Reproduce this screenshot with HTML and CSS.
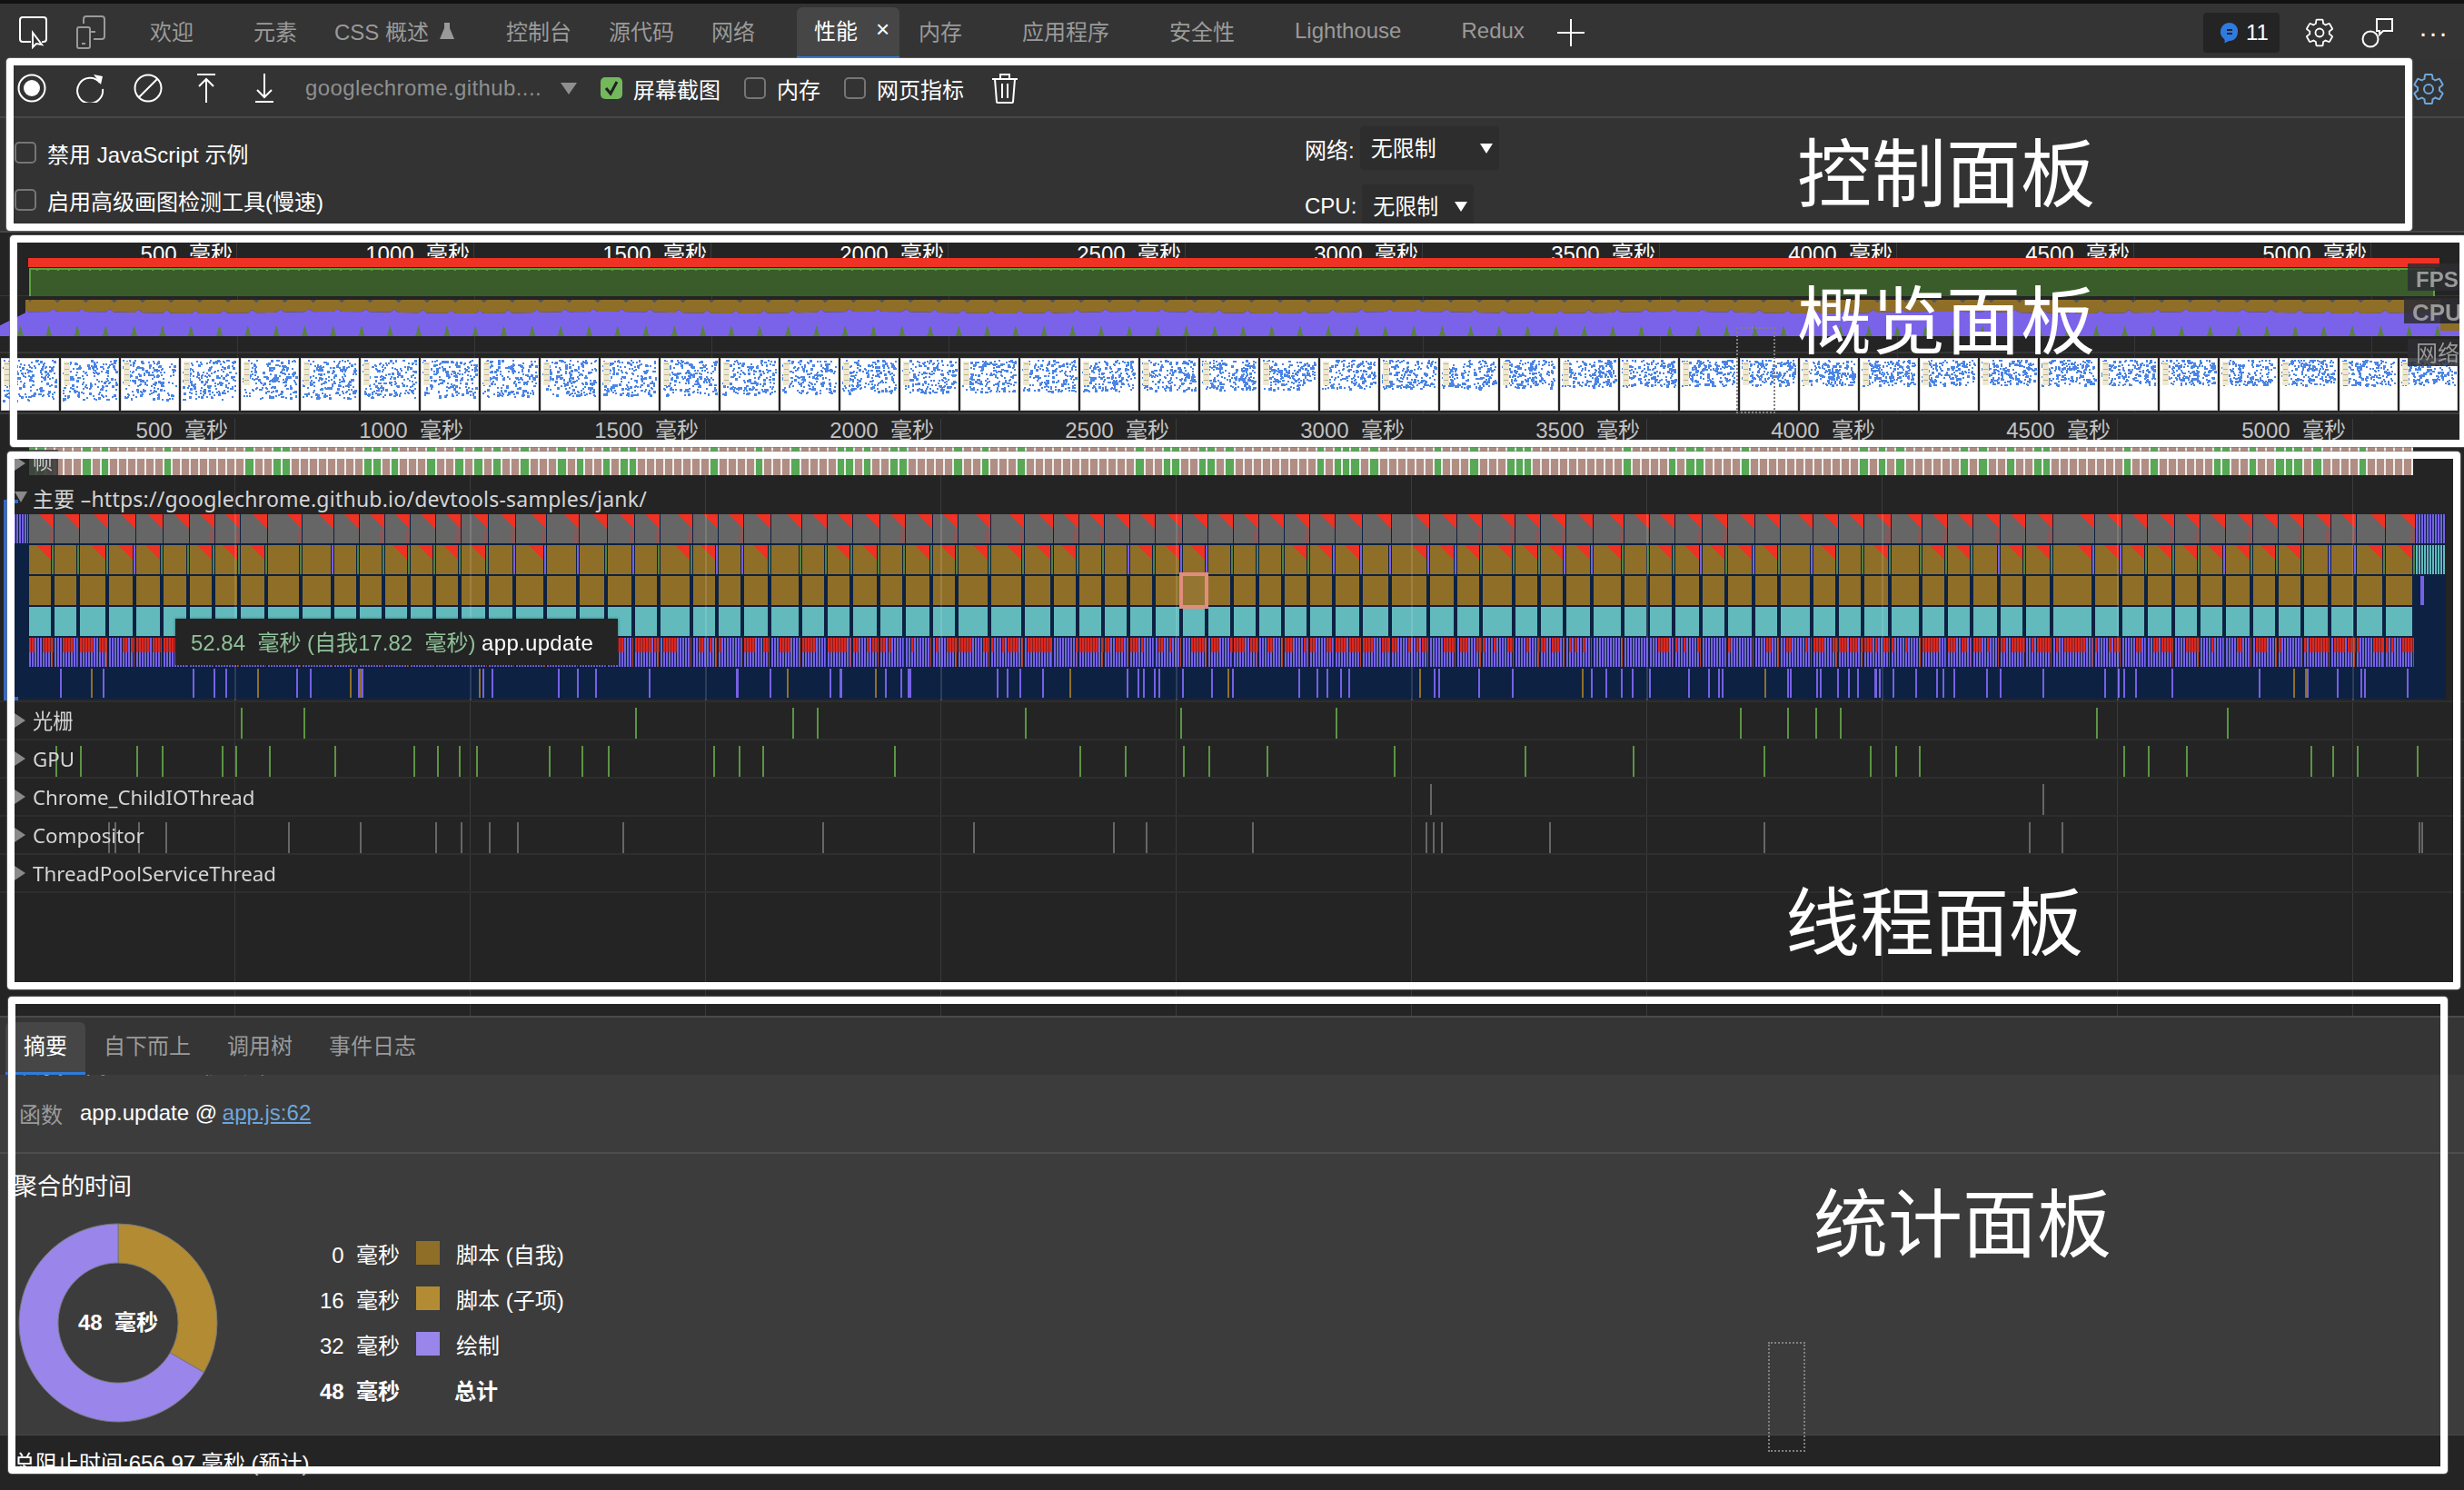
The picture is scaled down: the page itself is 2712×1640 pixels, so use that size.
FILE: index.html
```html
<!DOCTYPE html>
<html lang="zh">
<head>
  <meta charset="UTF-8">
  <title>性能</title>
  <link rel="stylesheet" href="styles.css">
</head>
<body>
  <svg class="defs">
    <symbol id="gear" viewBox="0 0 24 24">
      <path fill="none" stroke="currentColor" stroke-width="1.2" d="M19.14 12.94c.04-.3.06-.61.06-.94 0-.32-.02-.64-.07-.94l2.03-1.58c.18-.14.23-.41.12-.61l-1.92-3.32c-.12-.22-.37-.29-.59-.22l-2.39.96c-.5-.38-1.03-.7-1.62-.94l-.36-2.54c-.04-.24-.24-.41-.48-.41h-3.84c-.24 0-.43.17-.47.41l-.36 2.54c-.59.24-1.13.57-1.62.94l-2.39-.96c-.22-.08-.47 0-.59.22L2.74 8.87c-.12.21-.08.47.12.61l2.03 1.58c-.05.3-.09.63-.09.94s.02.64.07.94l-2.03 1.58c-.18.14-.23.41-.12.61l1.92 3.32c.12.22.37.29.59.22l2.39-.96c.5.38 1.03.7 1.62.94l.36 2.54c.05.24.24.41.48.41h3.84c.24 0 .44-.17.47-.41l.36-2.54c.59-.24 1.13-.56 1.62-.94l2.39.96c.22.08.47 0 .59-.22l1.92-3.32c.12-.22.07-.47-.12-.61l-2.01-1.58z"/>
      <circle cx="12" cy="12" r="3" fill="none" stroke="currentColor" stroke-width="1.2"/>
    </symbol>
  </svg>

  <!-- 顶部标签栏 -->
  <header class="tabbar">
    <svg class="icon-btn first" viewBox="0 0 32 38" width="32" height="38"><path fill="none" stroke="#fff" stroke-width="2" d="M14 30H5a3 3 0 0 1-3-3V6a3 3 0 0 1 3-3h23a3 3 0 0 1 3 3v21a3 3 0 0 1-3 3h-2"/><path fill="#333" stroke="#fff" stroke-width="2" d="M16 20l0 16 4-4 6 1z"/></svg>
    <svg class="icon-btn" viewBox="0 0 32 38" width="32" height="38"><path fill="none" stroke="#9a9a9a" stroke-width="2" d="M8 10V5a3 3 0 0 1 3-3h17a3 3 0 0 1 3 3v19a3 3 0 0 1-3 3h-9"/><rect x="1" y="14" width="14" height="23" rx="2" fill="none" stroke="#9a9a9a" stroke-width="2"/><path stroke="#9a9a9a" stroke-width="2" d="M16 19h5M6 32h4"/></svg>
    <div class="tab tab-gap">欢迎</div>
    <div class="tab">元素</div>
    <div class="tab tab-gap-sm">CSS 概述
      <svg class="flask" viewBox="0 0 16 20" width="16" height="20"><path fill="#9a9a9a" d="M5 1h6v6l5 12H0L5 7z"/></svg>
    </div>
    <div class="tab">控制台</div>
    <div class="tab">源代码</div>
    <div class="tab tab-gap">网络</div>
    <div class="tab tab-active">性能<span class="tab-close">×</span></div>
    <div class="tab tab-gap">内存</div>
    <div class="tab tab-gap">应用程序</div>
    <div class="tab tab-gap">安全性</div>
    <div class="tab tab-gap">Lighthouse</div>
    <div class="tab">Redux</div>
    <svg class="plus" viewBox="0 0 30 30" width="30" height="30"><path stroke="#fff" stroke-width="2" d="M0 15h30M15 0v30"/></svg>
    <div class="tabbar-right">
      <div class="issues">
        <svg viewBox="0 0 20 24" width="20" height="24"><path fill="#2f7be0" d="M10 1a9 9 0 0 1 9 10c0 6-4 10-9 10-2 0-3 2-6 2 1-1 1-3 0-4A10 10 0 0 1 10 1z"/><path stroke="#242424" stroke-width="2" d="M7 9h6M7 13h6"/></svg>
        <span>11</span>
      </div>
      <svg class="gear" width="36" height="36"><use href="#gear"/></svg>
      <svg class="feedback" viewBox="0 0 36 36" width="36" height="36"><circle cx="10" cy="25" r="8.5" fill="none" stroke="#fff" stroke-width="2"/><path fill="none" stroke="#fff" stroke-width="2" d="M17 3h17v13H24l-4 4v-4h-3z"/></svg>
      <div class="more">···</div>
    </div>
  </header>

  <!-- 控制面板 -->
  <section class="toolbar">
    <svg class="tool record" viewBox="0 0 32 32" width="32" height="32"><circle cx="16" cy="16" r="14.5" fill="none" stroke="#fff" stroke-width="2"/><circle cx="16" cy="16" r="9" fill="#fff"/></svg>
    <svg class="tool" viewBox="0 0 32 32" width="32" height="32"><path fill="none" stroke="#fff" stroke-width="2" d="M27 10a14 14 0 1 0 3 7"/><path fill="#fff" d="M20 1l10 2-2 9z"/></svg>
    <svg class="tool" viewBox="0 0 32 32" width="32" height="32"><circle cx="16" cy="16" r="14.5" fill="none" stroke="#fff" stroke-width="2"/><path stroke="#fff" stroke-width="2" d="M26 6L6 26"/></svg>
    <svg class="tool" viewBox="0 0 32 32" width="32" height="32"><path fill="none" stroke="#fff" stroke-width="2" d="M6 1h20M16 32V6M8 14l8-8 8 8"/></svg>
    <svg class="tool" viewBox="0 0 32 32" width="32" height="32"><path fill="none" stroke="#fff" stroke-width="2" d="M6 31h20M16 0v26M8 18l8 8 8-8"/></svg>
    <span class="origin">googlechrome.github....</span>
    <span class="origin-arrow"></span>
    <label class="check check-first"><span class="box box-on"><svg viewBox="0 0 24 24" width="24" height="24"><path fill="none" stroke="#222" stroke-width="3" d="M6 12l5 6 7-13"/></svg></span>屏幕截图</label>
    <label class="check"><span class="box"></span>内存</label>
    <label class="check"><span class="box"></span>网页指标</label>
    <svg class="trash" viewBox="0 0 30 34" width="30" height="34"><path fill="none" stroke="#fff" stroke-width="2" d="M1 7h28M10 7V2h10v5M4 7l2 25a1 1 0 0 0 1 1h16a1 1 0 0 0 1-1l2-25M12 12v16M18 12v16"/></svg>
    <svg class="gear-blue" width="40" height="40"><use href="#gear"/></svg>
  </section>

  <section class="settings">
    <div class="settings-col">
      <label class="check"><span class="box"></span>禁用 JavaScript 示例</label>
      <label class="check"><span class="box"></span>启用高级画图检测工具(慢速)</label>
    </div>
    <div class="throttle-col">
      <div class="throttle">网络:<span class="select select-wide">无限制<i class="select-arrow"></i></span></div>
      <div class="throttle">CPU:<span class="select">无限制<i class="select-arrow"></i></span></div>
    </div>
  </section>

  <!-- 概览面板 -->
  <section class="overview">
    <div class="ruler ruler-top">
      <span>500&nbsp; 毫秒</span><span>1000&nbsp; 毫秒</span><span>1500&nbsp; 毫秒</span><span>2000&nbsp; 毫秒</span><span>2500&nbsp; 毫秒</span>
      <span>3000&nbsp; 毫秒</span><span>3500&nbsp; 毫秒</span><span>4000&nbsp; 毫秒</span><span>4500&nbsp; 毫秒</span><span>5000&nbsp; 毫秒</span>
    </div>
    <canvas id="overview-canvas" width="2712" height="170"></canvas>
    <div class="ruler ruler-bottom">
      <span>500&nbsp; 毫秒</span><span>1000&nbsp; 毫秒</span><span>1500&nbsp; 毫秒</span><span>2000&nbsp; 毫秒</span><span>2500&nbsp; 毫秒</span>
      <span>3000&nbsp; 毫秒</span><span>3500&nbsp; 毫秒</span><span>4000&nbsp; 毫秒</span><span>4500&nbsp; 毫秒</span><span>5000&nbsp; 毫秒</span>
    </div>
    <div class="ov-tag ov-fps">FPS</div>
    <div class="ov-tag ov-cpu">CPU</div>
    <div class="ov-tag ov-net">网络</div>
    <div class="ov-dashed"></div>
  </section>

  <!-- 线程面板 -->
  <section class="threads">
    <div class="frames">
      <canvas id="frames-canvas" width="2712" height="42"></canvas>
      <i class="arrow arrow-right frames-arrow"></i>
      <span class="frames-label">帧</span>
    </div>
    <div class="main-head"><i class="arrow arrow-down"></i>主要 –https://googlechrome.github.io/devtools-samples/jank/</div>
    <div class="flame">
      <canvas id="flame-canvas" width="2712" height="207"></canvas>
      <div class="flame-mark"></div>
      <div class="flame-pick"></div>
      <div class="flame-tip">52.84&nbsp; 毫秒 (自我17.82&nbsp; 毫秒) <b>app.update</b></div>
    </div>
    <div class="track"><canvas class="ticks" width="2712" height="42" data-track="raster"></canvas><i class="arrow arrow-right"></i><span class="track-name">光栅</span></div>
    <div class="track"><canvas class="ticks" width="2712" height="42" data-track="gpu"></canvas><i class="arrow arrow-right"></i><span class="track-name">GPU</span></div>
    <div class="track"><canvas class="ticks" width="2712" height="42" data-track="io"></canvas><i class="arrow arrow-right"></i><span class="track-name">Chrome_ChildIOThread</span></div>
    <div class="track"><canvas class="ticks" width="2712" height="42" data-track="compositor"></canvas><i class="arrow arrow-right"></i><span class="track-name">Compositor</span></div>
    <div class="track"><canvas class="ticks" width="2712" height="42" data-track="pool"></canvas><i class="arrow arrow-right"></i><span class="track-name">ThreadPoolServiceThread</span></div>
  </section>

  <!-- 统计面板 -->
  <section class="details">
    <nav class="detail-tabs">
      <div class="detail-tab detail-tab-active">摘要</div>
      <div class="detail-tab">自下而上</div>
      <div class="detail-tab">调用树</div>
      <div class="detail-tab">事件日志</div>
    </nav>
    <div class="detail-clip"><span>自我时间: 17.82 毫秒 脚本</span></div>
    <div class="detail-func"><span class="detail-key">函数</span>app.update @ <a href="#">app.js:62</a></div>
    <h3 class="detail-title">聚合的时间</h3>
    <div class="detail-chart">
      <div class="pie">
        <svg viewBox="0 0 220 220" width="220" height="220">
          <path fill="#b38b32" stroke="#777" stroke-width="1" d="M110 1A109 109 0 0 1 204.4 164.5L167.2 143A66 66 0 0 0 110 44Z"/>
          <path fill="#9a85ea" stroke="#777" stroke-width="1" d="M204.4 164.5A109 109 0 1 1 110 1L110 44A66 66 0 1 0 167.2 143Z"/>
        </svg>
        <b class="pie-total">48&nbsp; 毫秒</b>
      </div>
      <div class="legend">
        <span class="legend-val">0&nbsp; 毫秒</span><i class="swatch swatch-self"></i><span>脚本 (自我)</span>
        <span class="legend-val">16&nbsp; 毫秒</span><i class="swatch swatch-child"></i><span>脚本 (子项)</span>
        <span class="legend-val">32&nbsp; 毫秒</span><i class="swatch swatch-paint"></i><span>绘制</span>
        <b class="legend-val">48&nbsp; 毫秒</b><i></i><b class="legend-total">总计</b>
      </div>
    </div>
    <div class="detail-foot">总阻止时间:656.97 毫秒 (预计)</div>
    <div class="detail-dots"></div>
  </section>

  <!-- 白色标注框 -->
  <div class="note note-control"><span>控制面板</span></div>
  <div class="note note-overview"><span>概览面板</span></div>
  <div class="note note-thread"><span>线程面板</span></div>
  <div class="note note-stats"><span>统计面板</span></div>

  <script src="script.js"></script>
</body>
</html>
```

FILE: styles.css
```css
* {
  box-sizing: border-box;
}
html, body {
  margin: 0;
  padding: 0;
}
body {
  position: relative;
  width: 2712px;
  height: 1640px;
  overflow: hidden;
  display: flex;
  flex-direction: column;
  background-color: #242424;
  color: #fff;
  font-family: "Liberation Sans", "Noto Sans CJK SC", sans-serif;
  font-size: 24px;
}
canvas {
  display: block;
}
.defs {
  position: absolute;
  width: 0;
  height: 0;
}

/* 标签栏 */
.tabbar {
  height: 64px;
  flex: none;
  display: flex;
  align-items: flex-end;
  background-color: #343434;
  border-top: 4px solid #111;
  color: #9a9a9a;
  white-space: nowrap;
}
.icon-btn {
  margin: 0 0 10px 32px;
  flex: none;
}
.icon-btn.first {
  margin-left: 20px;
}
.icon-btn + .tab {
  margin-left: 29px;
}
.tab {
  height: 56px;
  display: flex;
  align-items: center;
  padding: 0 20px 5px;
  margin-right: 1px;
}
.tab-gap {
  margin-right: 26px;
}
.tab-gap-sm {
  margin-right: 17px;
}
.flask {
  margin-left: 12px;
}
.tab-active {
  width: 113px;
  margin-right: 1px;
  padding-left: 19px;
  color: #fff;
  background-color: #464646;
  border-bottom: 2px solid #2f7bd8;
  border-radius: 6px 6px 0 0;
}
.tab-close {
  margin-left: 20px;
  font-size: 26px;
}
.plus {
  margin: 0 0 13px 15px;
}
.tabbar-right {
  margin: 3px 0 0 auto;
  display: flex;
  align-items: center;
  align-self: center;
  padding-right: 17px;
}
.issues {
  width: 84px;
  height: 44px;
  display: flex;
  align-items: center;
  gap: 8px;
  padding-left: 19px;
  border-radius: 4px;
  background-color: #242424;
  color: #fff;
}
.gear {
  color: #fff;
  margin-left: 26px;
}
.feedback {
  margin-left: 28px;
}
.more {
  margin-left: 27px;
  color: #fff;
  font-size: 30px;
  letter-spacing: 1px;
}

/* 工具栏 */
.toolbar {
  height: 66px;
  flex: none;
  position: relative;
  display: flex;
  align-items: center;
  padding: 2px 0 0 19px;
  background-color: #333;
  border-bottom: 2px solid #474747;
}
.tool {
  flex: none;
  margin-right: 32px;
}
.origin {
  margin-left: -3px;
  color: #8f8f8f;
  white-space: nowrap;
  width: 281px;
  letter-spacing: 0.4px;
}
.origin-arrow {
  width: 0;
  height: 0;
  margin-right: 26px;
  border-left: 9px solid transparent;
  border-right: 9px solid transparent;
  border-top: 13px solid #8f8f8f;
}
.check {
  display: flex;
  align-items: center;
  gap: 12px;
  color: #fff;
  white-space: nowrap;
}
.toolbar .check {
  margin-right: 26px;
}
.check-first {
  margin-right: 26px;
}
.box {
  width: 24px;
  height: 24px;
  flex: none;
  border: 2px solid #757575;
  border-radius: 5px;
}
.box-on {
  border: 0;
  background-color: #73b85c;
}
.trash {
  margin-left: 4px;
  flex: none;
}
.gear-blue {
  position: absolute;
  left: 2653px;
  top: 14px;
  color: #6ea6dc;
}

/* 设置 */
.settings {
  height: 126px;
  flex: none;
  display: flex;
  background-color: #333;
  border-bottom: 2px solid #474747;
}
.settings-col {
  width: 1436px;
  padding: 24px 0 0 16px;
  display: flex;
  flex-direction: column;
  gap: 24px;
}
.settings-col .check {
  height: 28px;
}
.throttle-col {
  display: flex;
  flex-direction: column;
  gap: 16px;
  padding-top: 9px;
}
.throttle {
  display: flex;
  align-items: center;
  gap: 6px;
  height: 48px;
}
.select {
  position: relative;
  width: 123px;
  height: 48px;
  display: flex;
  align-items: center;
  padding: 0 0 3px 12px;
  border-radius: 4px;
  background-color: #2d2d2d;
}
.select-wide {
  width: 153px;
}
.select-arrow {
  position: absolute;
  right: 7px;
  top: 19px;
  width: 0;
  height: 0;
  border-left: 7px solid transparent;
  border-right: 7px solid transparent;
  border-top: 11px solid #fff;
}

/* 概览 */
.overview {
  position: relative;
  flex: none;
  background-color: #242424;
}
.ruler {
  display: flex;
  overflow: hidden;
  font-size: 24px;
  line-height: 26px;
  white-space: nowrap;
}
.ruler span {
  flex: none;
  text-align: right;
}
.ruler-top {
  height: 28px;
  color: #fff;
  padding-top: 11px;
}
.ruler-top span {
  width: 261px;
  height: 28px;
  padding-right: 4px;
  border-right: 1px solid #3c3c3c;
}
.ruler-bottom {
  height: 30px;
  padding-top: 5px;
  color: #c2c2c2;
  border-top: 2px solid #3c3c3c;
}
.ruler-bottom span {
  width: 259px;
  height: 30px;
  padding-right: 7px;
  border-right: 1px solid #3c3c3c;
}
.ov-tag {
  position: absolute;
  left: 2650px;
  width: 62px;
  padding-left: 9px;
  color: #9a9a9a;
  font-weight: bold;
  background-color: rgba(45, 45, 50, 0.85);
}
.ov-fps {
  top: 34px;
  height: 30px;
  line-height: 36px;
}
.ov-cpu {
  top: 72px;
  left: 2646px;
  height: 28px;
  line-height: 32px;
  font-size: 26px;
  width: 66px;
}
.ov-net {
  top: 117px;
  height: 30px;
  line-height: 32px;
  font-weight: normal;
}
.ov-dashed {
  position: absolute;
  left: 1911px;
  top: 104px;
  width: 43px;
  height: 95px;
  border: 2px dotted #808080;
}

/* 线程 */
.threads {
  flex: 1;
  min-height: 0;
  background-color: #242424;
  background-image: repeating-linear-gradient(to right, transparent 0, transparent 258px, rgba(255, 255, 255, 0.1) 258px, rgba(255, 255, 255, 0.1) 259px);
}
.frames {
  position: relative;
  height: 42px;
}
.arrow {
  position: absolute;
  left: 16px;
  width: 0;
  height: 0;
}
.arrow-right {
  top: 50%;
  margin-top: -8px;
  border-top: 8px solid transparent;
  border-bottom: 8px solid transparent;
  border-left: 12px solid #8a8a8a;
}
.arrow-down {
  top: 15px;
  border-left: 7px solid transparent;
  border-right: 7px solid transparent;
  border-top: 12px solid #8a8a8a;
}
.frames-arrow {
  top: 26px;
}
.frames-label {
  position: absolute;
  left: 32px;
  top: 11px;
  width: 32px;
  height: 28px;
  line-height: 28px;
  padding-left: 4px;
  color: #c8c8c8;
  font-size: 22px;
  background-color: rgba(60, 60, 60, 0.9);
}
.main-head, .track-name {
  font-family: "Noto Sans", "Noto Sans CJK SC", sans-serif;
  color: #d4d4d4;
}
.main-head {
  position: relative;
  height: 40px;
  font-size: 23px;
  line-height: 46px;
  padding-left: 36px;
  white-space: nowrap;
  letter-spacing: 0.23px;
}
.flame {
  position: relative;
  height: 207px;
}
.flame-mark {
  position: absolute;
  left: 4px;
  top: -16px;
  width: 16px;
  height: 221px;
  border: 4px solid #3269c8;
  border-right: 0;
}
.flame-pick {
  position: absolute;
  left: 1298px;
  top: 64px;
  width: 32px;
  height: 40px;
  border: 4px solid #e08d7d;
  background-color: rgba(255, 255, 255, 0.05);
}
.flame-tip {
  position: absolute;
  left: 193px;
  top: 115px;
  width: 487px;
  height: 51px;
  line-height: 54px;
  padding-left: 17px;
  color: #8fc198;
  background-color: #242424;
  white-space: nowrap;
  box-shadow: 0 0 3px rgba(0, 0, 0, 0.4);
}
.flame-tip b {
  color: #fff;
  font-weight: normal;
  letter-spacing: 0.3px;
}
.track {
  position: relative;
  height: 42px;
  border-bottom: 2px solid #2e2e2e;
}
.track-name {
  position: absolute;
  left: 36px;
  top: 6px;
  font-size: 22.3px;
  line-height: 30px;
  white-space: nowrap;
}
.ticks {
  position: absolute;
  left: 0;
  top: 0;
}

/* 统计 */
.details {
  position: relative;
  height: 522px;
  flex: none;
  display: flex;
  flex-direction: column;
  background-color: #3c3c3c;
  border-top: 2px solid #4a4a4a;
}
.detail-tabs {
  height: 63px;
  flex: none;
  display: flex;
  align-items: flex-end;
  padding-left: 6px;
  background-color: #353535;
  color: #9a9a9a;
}
.detail-tab {
  height: 58px;
  padding: 0 20px;
  line-height: 54px;
}
.detail-tab-active {
  width: 88px;
  color: #fff;
  background-color: #464646;
  border-bottom: 3px solid #2f7bd8;
  border-radius: 6px 6px 0 0;
}
.detail-clip {
  height: 5px;
  overflow: hidden;
  padding-left: 22px;
  flex: none;
}
.detail-clip span {
  display: block;
  margin-top: -24px;
  color: #bbb;
  line-height: 28px;
}
.detail-func {
  height: 82px;
  flex: none;
  display: flex;
  align-items: center;
  padding: 0 0 6px 21px;
  white-space: pre;
  border-bottom: 2px solid #4d4d4d;
}
.detail-key {
  width: 67px;
  color: #9a9a9a;
}
.detail-func a {
  color: #6da6dc;
  margin-left: -1px;
}
.detail-title {
  margin: 0;
  height: 76px;
  flex: none;
  padding-left: 15px;
  line-height: 72px;
  font-size: 26px;
  font-weight: normal;
}
.detail-chart {
  flex: none;
  height: 233px;
  display: flex;
  padding-left: 20px;
}
.pie {
  position: relative;
  width: 220px;
  height: 220px;
}
.pie svg {
  display: block;
}
.pie-total {
  position: absolute;
  left: 0;
  top: 96px;
  width: 220px;
  text-align: center;
  white-space: nowrap;
  line-height: 28px;
}
.legend {
  margin-left: 45px;
  padding-top: 8px;
  display: grid;
  grid-template-columns: 155px 26px auto;
  grid-auto-rows: 50px;
  column-gap: 18px;
  align-items: center;
  justify-content: start;
  align-content: start;
}
.legend-val {
  text-align: right;
  white-space: nowrap;
}
.legend-total {
  margin-left: -2px;
}
.swatch {
  width: 26px;
  height: 26px;
}
.swatch-self {
  background-color: #8f6f28;
}
.swatch-child {
  background-color: #b38b32;
}
.swatch-paint {
  background-color: #9a85ea;
}
.detail-foot {
  flex: 1;
  padding: 15px 0 0 15px;
  line-height: 32px;
  background-color: #242424;
  border-top: 1px solid #474747;
  white-space: nowrap;
}
.detail-dots {
  position: absolute;
  left: 1946px;
  top: 357px;
  width: 41px;
  height: 121px;
  border: 2px dotted #808080;
}

/* 标注框 */
.note {
  position: absolute;
  z-index: 10;
  border: 8px solid #fff;
  border-radius: 4px;
  box-shadow: 0 0 1px 1px rgba(120, 120, 120, 0.6);
  pointer-events: none;
  font-size: 82px;
  line-height: 82px;
  white-space: nowrap;
  font-family: "Noto Sans CJK SC", sans-serif;
}
.note-control {
  left: 7px;
  top: 64px;
  width: 2648px;
  height: 190px;
  padding: 73px 0 0 1963px;
}
.note-overview {
  left: 11px;
  top: 259px;
  width: 2704px;
  height: 233px;
  padding: 40px 0 0 1959px;
}
.note-thread {
  left: 8px;
  top: 497px;
  width: 2700px;
  height: 592px;
  padding: 464px 0 0 1949px;
}
.note-stats {
  left: 9px;
  top: 1097px;
  width: 2685px;
  height: 525px;
  padding: 196px 0 0 1979px;
}
```

FILE: script.js
```js
// 简单的伪随机数，保证每次画出来都一样
function makeRandom(seed) {
  return function () {
    seed = (seed * 1664525 + 1013904223) % 4294967296;
    return seed / 4294967296;
  };
}

const RED = '#ee3224';
const BROWN = '#8f6f28';
const TEAL = '#62babc';
const PURPLE = '#7561e4';
const NAVY = '#0d2142';

function drawOverview() {
  const ctx = document.getElementById('overview-canvas').getContext('2d');
  const rand = makeRandom(7);

  // 网格线
  ctx.fillStyle = '#363636';
  ctx.fillRect(0, 41, 2712, 1);
  ctx.fillRect(0, 103, 2712, 2);
  for (let i = 1; i <= 10; i++) ctx.fillRect(261 * i, 0, 1, 170);

  // FPS
  ctx.fillStyle = RED;
  ctx.fillRect(31, 0, 2654, 10);
  ctx.fillStyle = '#3a5c2a';
  ctx.fillRect(32, 11, 2648, 31);
  ctx.fillStyle = '#5ba03e';
  ctx.fillRect(32, 11, 2648, 2);
  ctx.fillRect(32, 11, 2, 31);
  ctx.fillRect(2678, 11, 2, 31);
  for (let x = 40; x < 2680; x += 11.5) ctx.fillRect(Math.round(x), 13, 2, 1);

  // CPU
  for (let x = 0; x < 2707; x++) {
    const p = x / 31.3;
    const dip = Math.pow(Math.max(0, Math.cos(p * Math.PI * 2)), 10);
    const wave = Math.pow(Math.max(0, Math.cos((p + 0.15) * Math.PI * 2)), 6) * 3 + Math.sin(x / 47) * 1;
    let top = 46;
    let mid = 60 - wave;
    const bottom = 86;
    if (x < 28) {
      top = 60;
      mid = 74 - x / 2;
    }
    if (x > 2685) {
      top = 72;
      mid = 80;
    }
    const grey = x >= 32 && x < 2685;
    if (grey) {
      ctx.fillStyle = '#555';
      ctx.fillRect(x, 46, 1, 5);
    }
    const offset = grey ? dip * 3 : 0;
    if (x >= 28) {
      ctx.fillStyle = BROWN;
      ctx.fillRect(x, top + offset, 1, mid - top - offset);
    }
    ctx.fillStyle = '#7a63e8';
    ctx.fillRect(x, mid, 1, bottom - mid);
    const h = 11 * Math.pow(Math.max(0, Math.cos((p + 0.3) * Math.PI * 2)), 10);
    ctx.fillStyle = '#5a8044';
    ctx.fillRect(x, bottom - h, 1, h);
  }

  // 屏幕截图
  for (let k = 0; k <= 40; k++) {
    const left = 1 + 66 * k;
    const top = 110;
    ctx.fillStyle = '#fff';
    ctx.fillRect(left, top, 64, 58);
    ctx.strokeStyle = '#d4d4d4';
    ctx.strokeRect(left + 0.5, top + 0.5, 63, 57);
    const depth = Math.max(28, 45 - k * 0.58);
    ctx.fillStyle = '#4a84e6';
    for (let i = 0; i < 170; i++) {
      const size = rand() < 0.8 ? 2 : 3;
      ctx.fillRect(left + 2 + Math.floor(rand() * 59), top + 2 + Math.floor(rand() * depth), size, size);
    }
    ctx.fillStyle = '#efe9d2';
    ctx.fillRect(left + 3, top + 4, 7, 26);
    ctx.fillStyle = '#b8b08c';
    for (let y = 6; y < 28; y += 6) ctx.fillRect(left + 4, top + y, 5, 1);
  }
}

function drawFrames() {
  const ctx = document.getElementById('frames-canvas').getContext('2d');
  const rand = makeRandom(21);
  ctx.fillStyle = '#ececec';
  ctx.fillRect(32, 5, 2624, 34);
  let x = 32;
  while (x < 2654) {
    const green = rand() < 0.27;
    const w = green ? 7 + Math.floor(rand() * 3) : 8;
    ctx.fillStyle = green ? '#58a856' : '#b08e84';
    ctx.fillRect(x, 5, Math.min(w, 2656 - x), 34);
    x += w + 2;
  }
}

// 从 from 到 to 按 pattern 填任务宽度
function fillTasks(list, from, to, pattern) {
  let x = from;
  let i = 0;
  while (x < to) {
    let w = pattern[i % pattern.length];
    if (to - x - w < 28) w = to - x;
    list.push([x, w]);
    x += w;
    i++;
  }
}

function buildTasks() {
  const list = [];
  fillTasks(list, 32, 669, [28, 28, 32, 30, 30, 29, 28, 28, 30, 38, 35, 28, 28, 28, 28, 28, 30, 30, 34, 36, 30]);
  const middle = [30, 28, 36, 28, 28, 30, 34, 28, 28, 30, 28];
  fillTasks(list, 669, 1128, middle);
  fillTasks(list, 1128, 1574, [32, 28, 28, 28, 28, 30, 28, 28, 28, 28, 28, 28, 30, 32, 42]);
  fillTasks(list, 1574, 2306, middle);
  fillTasks(list, 2306, 2659, [30, 28, 30, 28, 28, 30, 28, 28, 30, 28, 32, 33]);
  return list;
}

function triangle(ctx, right, top) {
  ctx.fillStyle = RED;
  ctx.beginPath();
  ctx.moveTo(right - 16, top);
  ctx.lineTo(right, top);
  ctx.lineTo(right, top + 16);
  ctx.fill();
}

function stripes(ctx, x, y, w, h, color, step) {
  ctx.fillStyle = color;
  for (let i = x; i < x + w; i += step) ctx.fillRect(i, y, Math.min(2, x + w - i), h);
}

function drawFlame() {
  const ctx = document.getElementById('flame-canvas').getContext('2d');
  const rand = makeRandom(99);
  const rows = [0, 34, 68, 102, 136, 170];
  ctx.fillStyle = NAVY;
  ctx.fillRect(15, 0, 2677, 203);

  stripes(ctx, 15, rows[0], 16, 32, PURPLE, 3);
  stripes(ctx, 2659, rows[0], 33, 32, PURPLE, 3);
  stripes(ctx, 2659, rows[1], 33, 32, TEAL, 3);
  stripes(ctx, 2664, rows[2], 4, 32, PURPLE, 2);

  buildTasks().forEach(function (task) {
    const x = task[0];
    const w = task[1];
    const right = x + w - 1;

    ctx.fillStyle = '#666';
    ctx.fillRect(x, rows[0], w - 1, 32);
    triangle(ctx, right, rows[0]);
    if (rand() < 0.5) {
      ctx.fillStyle = 'rgba(210, 60, 60, 0.3)';
      ctx.fillRect(right - 5, rows[0] + 17, 5, 15);
    }

    const bw = w - 4;
    ctx.fillStyle = BROWN;
    ctx.fillRect(x, rows[1], bw, 32);
    ctx.fillRect(x, rows[2], bw, 32);
    if (rand() < 0.62) triangle(ctx, x + bw, rows[1]);
    ctx.fillStyle = rand() < 0.3 ? PURPLE : '#4f8048';
    ctx.fillRect(x + bw + 1, rows[1], 2, 32);

    ctx.fillStyle = TEAL;
    ctx.fillRect(x, rows[3], bw, 32);

    // 红紫条纹：上半红紫混合，下半全紫
    let red = rand() < 0.7;
    for (let i = x; i < x + w - 3; i += 3) {
      if (rand() < 0.3) red = !red;
      ctx.fillStyle = red ? '#d92a22' : PURPLE;
      ctx.fillRect(i, rows[4], 2, 16);
      if (red) {
        ctx.fillStyle = '#8a1f20';
        ctx.fillRect(i + 2, rows[4], 1, 16);
      }
      ctx.fillStyle = PURPLE;
      ctx.fillRect(i, rows[4] + 16, 2, 16);
    }
    ctx.fillStyle = '#b0402a';
    ctx.fillRect(x + w - 3, rows[4], 1, 32);

    // 稀疏的竖线
    const count = Math.floor(rand() * 3.4);
    for (let n = 0; n < count; n++) {
      ctx.fillStyle = rand() < 0.12 ? BROWN : PURPLE;
      ctx.fillRect(x + Math.floor(rand() * w), rows[5], 2, 32);
    }
  });

  // 时间网格
  ctx.fillStyle = 'rgba(255, 255, 255, 0.13)';
  for (let i = 1; i <= 10; i++) ctx.fillRect(259 * i - 1, 0, 2, 207);
  ctx.fillStyle = '#2e2e2e';
  ctx.fillRect(0, 205, 2712, 2);
}

const S = 2712 / 1568;
const TRACKS = {
  raster: { color: '#5c9444', x: [153, 193, 404, 504, 520, 652, 751, 850, 1107, 1137, 1155, 1171, 1334, 1417] },
  gpu: { color: '#5c9444', x: [35, 51, 87, 103, 141, 150, 171, 213, 263, 278, 292, 303, 349, 370, 387, 454, 470, 485, 569, 687, 716, 753, 769, 806, 887, 970, 1039, 1122, 1190, 1206, 1221, 1351, 1367, 1391, 1470, 1484, 1500, 1538] },
  io: { color: '#666', x: [910, 1300] },
  compositor: { color: '#666', x: [69, 73, 88, 105, 183, 229, 277, 293, 311, 329, 396, 523, 619, 708, 729, 797, 907, 912, 917, 986, 1122, 1291, 1312, 1539, 1541] },
  pool: { color: '#666', x: [] }
};

function drawTicks() {
  document.querySelectorAll('.ticks').forEach(function (canvas) {
    const track = TRACKS[canvas.dataset.track];
    const ctx = canvas.getContext('2d');
    ctx.fillStyle = track.color;
    track.x.forEach(function (x) {
      ctx.fillRect(Math.round(x * S), 6, 2, 34);
    });
  });
}

drawOverview();
drawFrames();
drawFlame();
drawTicks();
```
